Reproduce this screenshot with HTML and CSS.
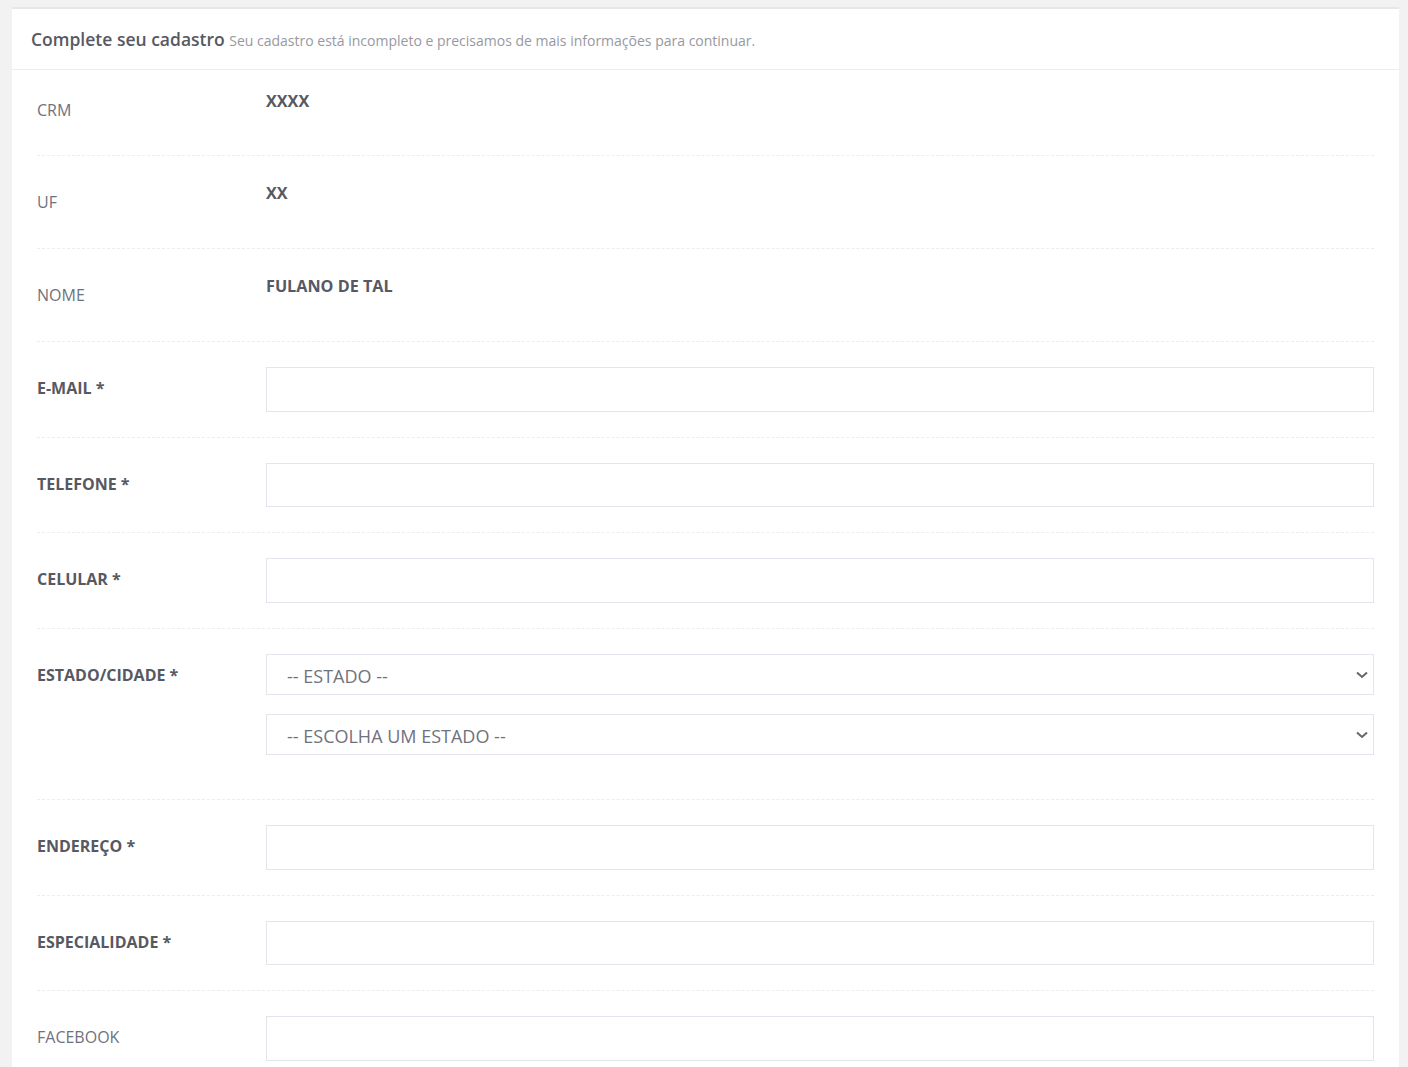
FILE: index.html
```html
<!DOCTYPE html>
<html lang="pt-BR">
<head>
<meta charset="utf-8">
<title>Complete seu cadastro</title>
<link rel="stylesheet" href="styles.css">
</head>
<body>
<div class="portlet">
  <div class="portlet-head">
    <h3 class="portlet-title">Complete seu cadastro <small>Seu cadastro está incompleto e precisamos de mais informações para continuar.</small></h3>
  </div>
  <form class="portlet-body">
    <div class="row row-first">
      <label class="lbl">CRM</label>
      <div class="val">XXXX</div>
    </div>
    <div class="row">
      <label class="lbl">UF</label>
      <div class="val">XX</div>
    </div>
    <div class="row">
      <label class="lbl">NOME</label>
      <div class="val">FULANO DE TAL</div>
    </div>
    <div class="row">
      <label class="lbl req">E-MAIL *</label>
      <div class="field"><input class="input" type="text"></div>
    </div>
    <div class="row">
      <label class="lbl req">TELEFONE *</label>
      <div class="field"><input class="input" type="text"></div>
    </div>
    <div class="row">
      <label class="lbl req">CELULAR *</label>
      <div class="field"><input class="input" type="text"></div>
    </div>
    <div class="row row-selects">
      <label class="lbl req">ESTADO/CIDADE *</label>
      <div class="field">
        <div class="select-wrap">
          <select class="select"><option>-- ESTADO --</option></select>
          <svg class="chev" width="12" height="8" viewBox="0 0 12 8"><path d="M1 1.5 L6 6 L11 1.5" fill="none" stroke="#666" stroke-width="2"/></svg>
        </div>
        <div class="select-wrap">
          <select class="select"><option>-- ESCOLHA UM ESTADO --</option></select>
          <svg class="chev" width="12" height="8" viewBox="0 0 12 8"><path d="M1 1.5 L6 6 L11 1.5" fill="none" stroke="#666" stroke-width="2"/></svg>
        </div>
      </div>
    </div>
    <div class="row">
      <label class="lbl req">ENDEREÇO *</label>
      <div class="field"><input class="input" type="text"></div>
    </div>
    <div class="row">
      <label class="lbl req">ESPECIALIDADE *</label>
      <div class="field"><input class="input" type="text"></div>
    </div>
    <div class="row">
      <label class="lbl">FACEBOOK</label>
      <div class="field"><input class="input" type="text"></div>
    </div>
  </form>
</div>
</body>
</html>
```
FILE: styles.css
```css
* { box-sizing: border-box; }
html, body { margin: 0; }
body {
  background: #f2f2f2;
  padding: 7px 9px 0 12px;
  font-family: "Open Sans", "Noto Sans", sans-serif;
  color: #575962;
}
.portlet {
  background: #fff;
  border-top: 2px solid #e4e8ec;
}
.portlet-head {
  height: 61px;
  border-bottom: 1px solid #ebedf2;
  padding: 0 19px;
  display: flex;
  align-items: center;
}
.portlet-title {
  margin: 0;
  font-size: 17.5px;
  font-weight: 600;
  color: #575962;
  line-height: 1;
  padding-top: 1px;
}
.portlet-title small {
  font-size: 14px;
  font-weight: 400;
  color: #9699a2;
}
.portlet-body {
  padding: 0 25px;
}
.row {
  display: grid;
  grid-template-columns: 229px 1fr;
  padding: 25px 0;
  min-height: 93px;
  border-bottom: 1px dashed #ebedf2;
}
.row-first {
  padding-top: 19px;
  min-height: 86px;
}
.lbl {
  font-size: 16px;
  line-height: 24px;
  padding-top: 9px;
  color: #6f727d;
}
.lbl.req {
  font-weight: 700;
  color: #575962;
}
.val {
  font-size: 16.2px;
  line-height: 24px;
  font-weight: 700;
  color: #575962;
}
.input {
  display: block;
  width: 100%;
  height: 44.7px;
  border: 1px solid #e2e5ec;
  border-radius: 0;
  background: #fff;
  font: inherit;
  outline: none;
  padding: 0 20px;
}
.select-wrap {
  position: relative;
  margin-bottom: 19px;
}
.select {
  display: block;
  width: 100%;
  height: 41px;
  -webkit-appearance: none;
  appearance: none;
  border: 1px solid #e2e5ec;
  border-radius: 0;
  background: #fff;
  font-family: "Open Sans", "Noto Sans", sans-serif;
  font-size: 18px;
  color: #6f727d;
  padding: 2px 40px 0 20px;
  outline: none;
}
.chev {
  position: absolute;
  right: 6px;
  top: 17px;
  pointer-events: none;
}
```
